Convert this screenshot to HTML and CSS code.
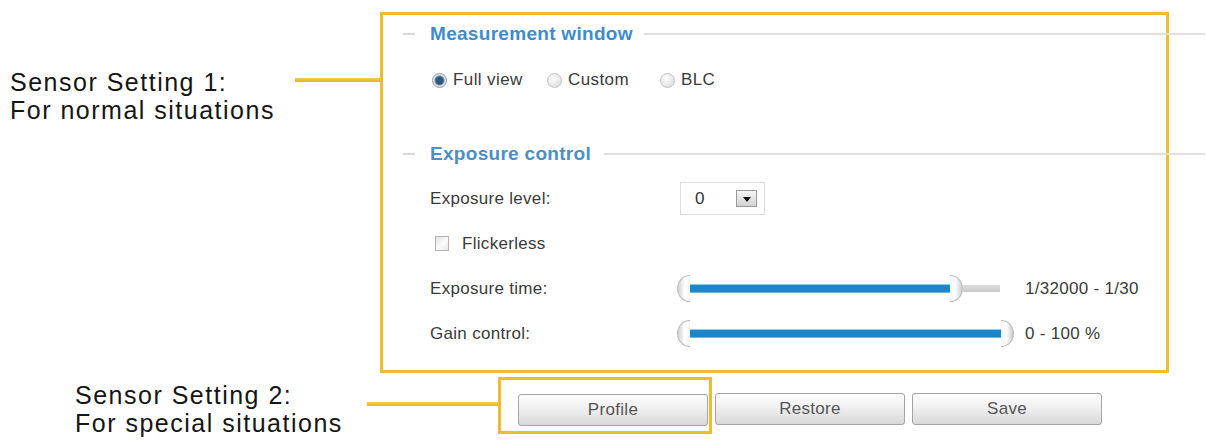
FILE: index.html
```html
<!DOCTYPE html>
<html lang="en">
<head>
<meta charset="utf-8">
<title>Sensor Settings</title>
<link rel="stylesheet" href="styles.css">
</head>
<body>
<div class="page">
  <div class="row row-top">
    <div class="note note1">Sensor Setting 1:<br>For normal situations</div>
    <div class="conn conn1"></div>
    <div class="panel">
      <div class="legend legend1">
        <span class="dash"></span>
        <span class="title">Measurement window</span>
        <span class="rule"></span>
      </div>
      <div class="radios">
        <label class="opt opt1"><span class="radio on"></span><span class="otext">Full view</span></label>
        <label class="opt opt2"><span class="radio"></span><span class="otext">Custom</span></label>
        <label class="opt opt3"><span class="radio"></span><span class="otext">BLC</span></label>
      </div>
      <div class="legend legend2">
        <span class="dash"></span>
        <span class="title">Exposure control</span>
        <span class="rule"></span>
      </div>
      <div class="controls">
        <div class="crow">
          <span class="lbl">Exposure level:</span>
          <div class="select"><span class="selval">0</span><span class="drop"><span class="tri"></span></span></div>
        </div>
        <div class="crow">
          <span class="check"></span><span class="ctext">Flickerless</span>
        </div>
        <div class="crow">
          <span class="lbl">Exposure time:</span>
          <div class="slider">
            <span class="hl"></span><span class="fill fill1"></span><span class="hr"></span><span class="rest"></span>
          </div>
          <span class="val val1">1/32000 - 1/30</span>
        </div>
        <div class="crow">
          <span class="lbl">Gain control:</span>
          <div class="slider">
            <span class="hl"></span><span class="fill fill2"></span><span class="hr"></span>
          </div>
          <span class="val val2">0 - 100 %</span>
        </div>
      </div>
    </div>
  </div>
  <div class="row row-bottom">
    <div class="note note2">Sensor Setting 2:<br>For special situations</div>
    <div class="conn conn2"></div>
    <div class="profile-box"><button class="btn">Profile</button></div>
    <button class="btn btn-restore">Restore</button>
    <button class="btn btn-save">Save</button>
  </div>
</div>
</body>
</html>
```

FILE: styles.css
```css
html, body {
  margin: 0;
  padding: 0;
  background: #ffffff;
}
body {
  width: 1207px;
  height: 440px;
  overflow: hidden;
  font-family: "Liberation Sans", Arial, sans-serif;
}
.page {
  width: 1207px;
  height: 440px;
}
.row {
  display: flex;
  align-items: flex-start;
}
.row-top {
  height: 373px;
}
.row-bottom {
  margin-top: 4px;
  height: 63px;
}

/* annotations */
.note {
  box-sizing: border-box;
  font-size: 25px;
  line-height: 28px;
  letter-spacing: 1.5px;
  color: #151515;
  white-space: nowrap;
}
.note1 {
  width: 295px;
  padding-left: 10px;
  margin-top: 68px;
}
.note2 {
  width: 367px;
  padding-left: 75px;
  margin-top: 4px;
}
.conn {
  height: 4px;
  background: linear-gradient(#f3cd4a, #e6b420);
}
.conn1 {
  width: 85px;
  margin-top: 78px;
}
.conn2 {
  width: 131px;
  margin-top: 25px;
}

/* main panel */
.panel {
  box-sizing: border-box;
  width: 789px;
  height: 361px;
  margin-top: 12px;
  border: 3px solid #edbd2a;
  display: flex;
  flex-direction: column;
}
.legend {
  display: flex;
  align-items: center;
  padding-left: 20px;
  margin-right: -39px;
}
.legend1 {
  height: 38px;
}
.legend2 {
  height: 36px;
  margin-top: 29px;
}
.dash {
  width: 12px;
  height: 2px;
  background: #d8d8d8;
}
.title {
  margin-left: 15px;
  font-size: 19px;
  font-weight: bold;
  letter-spacing: 0.3px;
  color: #3d8cd0;
  line-height: 22px;
}
.legend2 .title {
  color: #4a8fc6;
}
.rule {
  flex: 1;
  height: 2px;
  margin-left: 11px;
  background: #e2dfe0;
}
.legend2 .rule {
  margin-left: 13px;
}

.radios {
  height: 54px;
  display: flex;
  align-items: center;
  padding-left: 49px;
}
.opt {
  display: flex;
  align-items: center;
  font-size: 17px;
  letter-spacing: 0.4px;
  color: #3a3a3a;
}
.opt1 { width: 115px; }
.opt2 { width: 113px; }
.otext {
  margin-left: 6px;
}
.radio {
  box-sizing: border-box;
  width: 15px;
  height: 15px;
  border-radius: 50%;
  border: 1px solid #c2c2c2;
  background: radial-gradient(circle at 40% 35%, #fcfcfc 0%, #e6e6e6 60%, #d4d4d4 100%);
}
.radio.on {
  border-color: #8d9aa5;
  background: radial-gradient(circle at 50% 50%, #2d5a7c 0 3.5px, #6f8ea6 4.5px, #e6e9ec 5.5px, #c9ced3 100%);
}

.controls {
  margin-top: 4px;
  display: flex;
  flex-direction: column;
}
.crow {
  height: 45px;
  display: flex;
  align-items: center;
  padding-left: 47px;
  font-size: 17px;
  letter-spacing: 0.3px;
  color: #3a3a3a;
}
.lbl {
  width: 247px;
  flex: none;
}
.crow:first-child .lbl {
  width: 250px;
}

.select {
  box-sizing: border-box;
  width: 85px;
  height: 33px;
  border: 1px solid #dcdcdc;
  display: flex;
  align-items: center;
  padding-left: 14px;
  padding-right: 7px;
  color: #333;
}
.selval {
  flex: 1;
}
.drop {
  box-sizing: border-box;
  width: 21px;
  height: 17px;
  border: 1px solid #9a9a9a;
  background: linear-gradient(#f7f7f7, #d2d2d2);
  display: flex;
  align-items: center;
  justify-content: center;
}
.tri {
  width: 0;
  height: 0;
  border-left: 4px solid transparent;
  border-right: 4px solid transparent;
  border-top: 5px solid #111;
  margin-top: 2px;
}

.check {
  box-sizing: border-box;
  width: 14px;
  height: 15px;
  margin-left: 5px;
  border: 1px solid #b3b3b3;
  background: linear-gradient(135deg, #e4e4e4, #fbfbfb 55%, #e8e8e8);
}
.ctext {
  margin-left: 13px;
}

.slider {
  display: flex;
  align-items: center;
  height: 28px;
}
.hl, .hr {
  box-sizing: border-box;
  width: 13px;
  height: 27px;
  flex: none;
}
.hl {
  border: 1px solid #bdbdbd;
  border-right: none;
  border-radius: 13px 0 0 13px / 14px 0 0 14px;
  background: linear-gradient(to right, #cfcfcf, #ffffff 55%, #f4f4f4);
}
.hr {
  border: 1px solid #bdbdbd;
  border-left: none;
  border-radius: 0 13px 13px 0 / 0 14px 14px 0;
  background: linear-gradient(to left, #c9c9c9, #ffffff 55%, #eef6fb);
}
.fill {
  box-sizing: border-box;
  height: 9px;
  background: #1c86c7;
  border-top: 1px solid #8ccdee;
  border-bottom: 1px solid #6cb8e0;
}
.fill1 { width: 260px; }
.fill2 { width: 311px; }
.rest {
  width: 37px;
  height: 7px;
  background: linear-gradient(#dedede, #c9c9c9);
}
.val {
  white-space: nowrap;
  color: #3a3a3a;
}
.val1 { margin-left: 25px; }
.val2 { margin-left: 11px; }

/* bottom buttons */
.profile-box {
  box-sizing: border-box;
  width: 214px;
  height: 57px;
  border: 3px solid #edbd2a;
  padding-top: 14px;
  padding-left: 17px;
}
.btn {
  box-sizing: border-box;
  width: 190px;
  height: 32px;
  margin: 0;
  padding: 0;
  border: 1px solid #a4a4a4;
  border-radius: 3px;
  background: linear-gradient(#fdfdfd 0%, #f0f0f0 45%, #d8d8d8 100%);
  font-family: "Liberation Sans", Arial, sans-serif;
  font-size: 17px;
  letter-spacing: 0.3px;
  color: #555555;
  display: block;
}
.btn-restore {
  margin-left: 3px;
  margin-top: 16px;
}
.btn-save {
  margin-left: 7px;
  margin-top: 16px;
}
```
